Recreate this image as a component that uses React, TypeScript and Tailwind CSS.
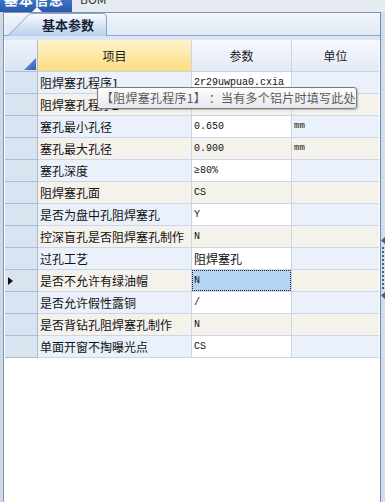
import React from "react";

const cjk = '"Noto Sans CJK SC", "Liberation Sans", sans-serif';
const mono = '"Liberation Mono", "Noto Sans CJK SC", monospace';

// 项目 / 参数 / 单位
const rows: [string, string, string][] = [
  ["阻焊塞孔程序1", "2r29uwpua0.cxia", ""],
  ["阻焊塞孔程序2", "/", ""],
  ["塞孔最小孔径", "0.650", "mm"],
  ["塞孔最大孔径", "0.900", "mm"],
  ["塞孔深度", "≥80%", ""],
  ["阻焊塞孔面", "CS", ""],
  ["是否为盘中孔阻焊塞孔", "Y", ""],
  ["控深盲孔是否阻焊塞孔制作", "N", ""],
  ["过孔工艺", "阻焊塞孔", ""],
  ["是否不允许有绿油帽", "N", ""],
  ["是否允许假性露铜", "/", ""],
  ["是否背钻孔阻焊塞孔制作", "N", ""],
  ["单面开窗不掏曝光点", "CS", ""],
];

const selectedRow = 9;
const hasCjk = (s: string) => /[\u4e00-\u9fff]/.test(s);

const Splitter = () => (
  <div className="w-[5px] bg-[#d3deec] border-l border-[#6f87ab] flex flex-col items-center pt-[225px]">
    <svg width="4" height="7" viewBox="0 0 4 7">
      <path d="M4 0 L0 3.5 L4 7 Z" fill="#4a5f80" />
    </svg>
    <div className="mt-[3px] flex flex-col gap-[2px]">
      {Array.from({ length: 11 }).map((_, i) => (
        <div key={i} className="w-[2px] h-[2px] bg-[#4a5f80]" />
      ))}
    </div>
    <div className="mt-[3px]">
      <svg width="4" height="7" viewBox="0 0 4 7">
        <path d="M4 0 L0 3.5 L4 7 Z" fill="#4a5f80" />
      </svg>
    </div>
  </div>
);

const TabShape = () => (
  <svg className="absolute inset-0" width="100" height="23" viewBox="0 0 100 23">
    <defs>
      <linearGradient id="tabg" x1="0" y1="0" x2="0" y2="1">
        <stop offset="0" stopColor="#fbfcfe" />
        <stop offset="1" stopColor="#b9cfee" />
      </linearGradient>
    </defs>
    <path
      d="M0.5 23 L22 1.5 Q23 0.5 25 0.5 L96 0.5 Q99.5 0.5 99.5 4 L99.5 23"
      fill="url(#tabg)"
      stroke="#8aa4c8"
    />
  </svg>
);

export default function App() {
  return (
    <div
      className="w-[385px] h-[502px] bg-[#e3e9f1] overflow-hidden flex flex-col relative"
      style={{ fontFamily: cjk }}
    >
      {/* top strip */}
      <div className="h-[12px] flex items-start overflow-hidden bg-[#e6ebf2]">
        <div className="relative w-[72px] h-[12px] bg-gradient-to-b from-[#3c73c4] to-[#2a5aa8] overflow-hidden">
          <div className="-mt-[10px] pl-[4px] text-[14px] font-bold text-white leading-[18px] tracking-[1px]">
            基本信息
          </div>
          <svg className="absolute left-[32px] top-[7px]" width="10" height="5" viewBox="0 0 10 5">
            <path d="M0 5 L5 0 L10 5 Z" fill="#ffffff" />
          </svg>
        </div>
        <div className="-mt-[9px] pl-[8px] text-[12px] text-[#333] leading-[16px]">BOM</div>
      </div>

      <div className="flex-1 flex">
        <div className="w-[3px] bg-[#cfd8e5]" />
        <div className="flex-1 flex flex-col border-l border-t border-[#7d93b5] bg-white">
          {/* tab strip */}
          <div className="h-[22px] bg-gradient-to-b from-[#f3f6fb] to-[#dfe8f4] flex items-end pl-[3px]">
            <div className="relative w-[100px] h-[23px] -mb-[1px]">
              <TabShape />
              <div className="relative pl-[35px] pt-[3px] text-[13px] font-bold text-[#162238] leading-[18px]">
                基本参数
              </div>
            </div>
          </div>
          <div className="h-[1px] bg-[#8fa8cc]" />
          <div className="h-[4px] bg-[#dbe6f4]" />

          {/* grid */}
          <div className="flex-1 pl-[1px] bg-white">
            {/* header */}
            <div className="flex h-[32px] text-[12px] text-[#1a1a1a]">
              <div className="relative w-[33px] bg-gradient-to-b from-[#eef3fa] to-[#d8e3f2] border-r border-b border-[#a9bcd6]">
                <svg className="absolute right-[1px] bottom-[1px]" width="12" height="12" viewBox="0 0 12 12">
                  <defs>
                    <linearGradient id="tri" x1="0" y1="0" x2="1" y2="1">
                      <stop offset="0" stopColor="#7ea7e0" />
                      <stop offset="1" stopColor="#2d5db2" />
                    </linearGradient>
                  </defs>
                  <path d="M12 0 L12 12 L0 12 Z" fill="url(#tri)" />
                </svg>
              </div>
              <div className="w-[154px] flex items-center justify-center bg-gradient-to-b from-[#fff3c9] to-[#fbdc80] border-r border-b border-[#c9d5e6]">
                项目
              </div>
              <div className="w-[100px] flex items-center justify-center bg-gradient-to-b from-[#f7f9fd] to-[#e2eaf6] border-r border-b border-[#c9d5e6]">
                参数
              </div>
              <div className="w-[87px] flex items-center justify-center bg-gradient-to-b from-[#f7f9fd] to-[#e2eaf6] border-b border-[#c9d5e6]">
                单位
              </div>
            </div>

            {rows.map(([item, value, unit], i) => {
              const even = i % 2 === 1;
              const roBg = even ? "bg-[#f5f2ec]" : "bg-[#eaf1fb]";
              const valBg = i === selectedRow ? "bg-[#b5d3f3]" : even ? "bg-[#f5f2ec]" : "bg-white";
              return (
                <div key={i} className="flex h-[22px] text-[12px] text-[#111]">
                  <div className="w-[33px] flex items-center pl-[3px] bg-[#dae4f1] border-r border-b border-[#aabdd6]">
                    {i === selectedRow && (
                      <svg width="5" height="8" viewBox="0 0 5 8">
                        <path d="M0 0 L5 4 L0 8 Z" fill="#111" />
                      </svg>
                    )}
                  </div>
                  <div className={`w-[154px] flex items-center pl-[2px] ${roBg} border-r border-b border-[#c9d6ea] whitespace-nowrap overflow-hidden`}>
                    {item}
                  </div>
                  <div className={`w-[100px] flex border-r border-b border-[#c9d6ea] ${valBg}`}>
                    <div
                      className={`flex-1 flex items-center pl-[1px] whitespace-nowrap overflow-hidden ${
                        i === selectedRow ? "border border-dotted border-[#222]" : "border border-transparent"
                      } ${hasCjk(value) ? "text-[12px]" : "text-[10px]"}`}
                      style={{ fontFamily: hasCjk(value) ? cjk : mono }}
                    >
                      {value}
                    </div>
                  </div>
                  <div
                    className={`w-[87px] flex items-center pl-[2px] text-[9px] ${roBg} border-b border-[#c9d6ea]`}
                    style={{ fontFamily: mono }}
                  >
                    {unit}
                  </div>
                </div>
              );
            })}
          </div>
        </div>
        <Splitter />
      </div>

      {/* tooltip */}
      <div className="absolute left-[97px] top-[87px] w-[260px] h-[22px] rounded-[3px] border border-[#7a7a7a] bg-gradient-to-b from-[#fdfdfd] to-[#e6e7ee] shadow-[1px_1px_2px_rgba(0,0,0,0.25)] flex items-center pl-[3px] text-[12px] text-[#5a5a5a] whitespace-nowrap tracking-[0.25px]">
        【阻焊塞孔程序1】 ：当有多个铝片时填写此处
      </div>
    </div>
  );
}
